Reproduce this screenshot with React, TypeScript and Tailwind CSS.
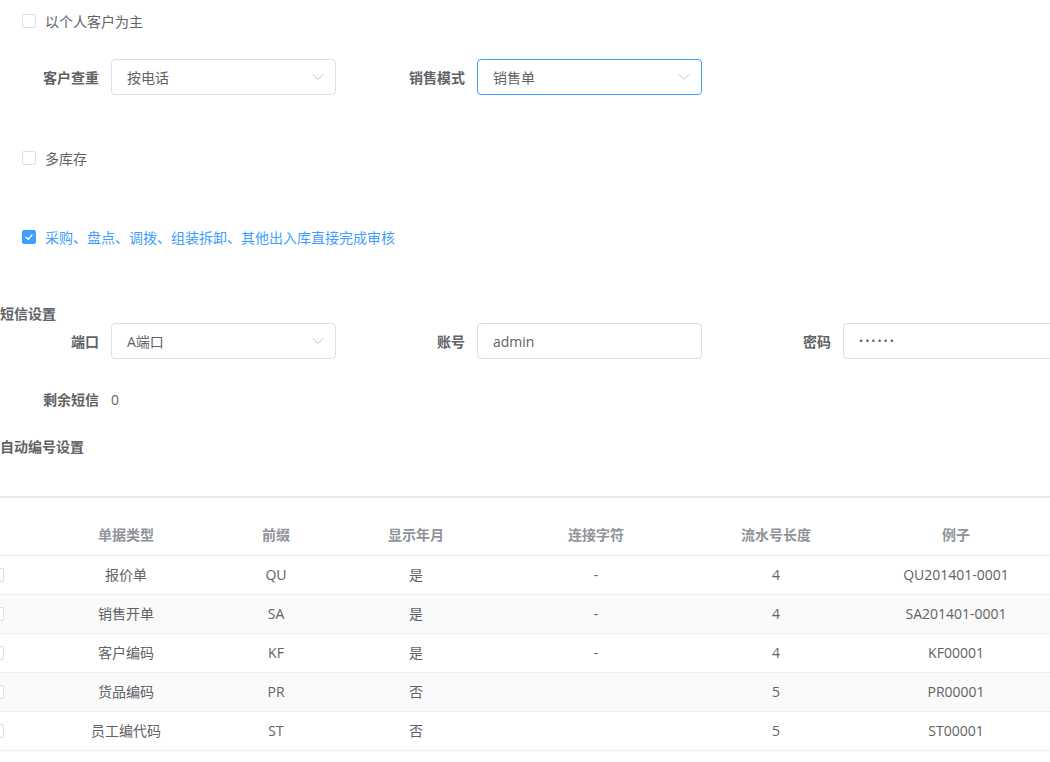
import React from "react";

const font = "font-['Open_Sans','Noto_Sans_CJK_SC',sans-serif]";

function Chevron() {
  return (
    <svg width="14" height="14" viewBox="0 0 14 14" fill="none" stroke="#c0c4cc" strokeWidth="1" strokeLinecap="round" strokeLinejoin="round">
      <path d="M2 4.5 L7 9.5 L12 4.5" />
    </svg>
  );
}

function Check({ checked, label }: { checked?: boolean; label: string }) {
  return (
    <div className="flex items-center pl-[22px] h-[28px]">
      {checked ? (
        <span className="w-[14px] h-[14px] rounded-[2px] bg-[#409eff] border border-[#409eff] flex items-center justify-center">
          <svg width="10" height="10" viewBox="0 0 10 10" fill="none" stroke="#fff" strokeWidth="1.3" strokeLinecap="round" strokeLinejoin="round">
            <path d="M2 5.2 L4.2 7.3 L8 3" />
          </svg>
        </span>
      ) : (
        <span className="w-[14px] h-[14px] rounded-[2px] bg-white border border-[#dcdfe6]" />
      )}
      <span className={`ml-[9px] text-[14px] ${checked ? "text-[#409eff]" : "text-[#606266]"}`}>{label}</span>
    </div>
  );
}

function Select({ value, focused }: { value: string; focused?: boolean }) {
  return (
    <div
      className={`w-[225px] h-[36px] rounded-[4px] border ${focused ? "border-[#409eff]" : "border-[#dcdfe6]"} bg-white flex items-center justify-between pl-[15px] pr-[10px] shrink-0`}
    >
      <span className="text-[14px] text-[#606266]">{value}</span>
      <Chevron />
    </div>
  );
}

function Input({ value, wide, small }: { value: string; wide?: boolean; small?: boolean }) {
  return (
    <div
      className={`${wide ? "w-[260px]" : "w-[225px]"} h-[36px] rounded-[4px] border border-[#dcdfe6] bg-white flex items-center pl-[15px] shrink-0`}
    >
      <span className={`${small ? "text-[11px] tracking-[2px]" : "text-[14px]"} text-[#606266]`}>{value}</span>
    </div>
  );
}

function Label({ text, w }: { text: string; w: string }) {
  return (
    <div className={`${w} shrink-0 pr-[12px] text-right text-[14px] font-bold text-[#606266]`}>{text}</div>
  );
}

const rows = [
  ["报价单", "QU", "是", "-", "4", "QU201401-0001"],
  ["销售开单", "SA", "是", "-", "4", "SA201401-0001"],
  ["客户编码", "KF", "是", "-", "4", "KF00001"],
  ["货品编码", "PR", "否", "", "5", "PR00001"],
  ["员工编代码", "ST", "否", "", "5", "ST00001"],
];

const widths = ["w-[58px]", "w-[200px]", "w-[100px]", "w-[180px]", "w-[180px]", "w-[180px]", "w-[180px]"];

export default function App() {
  return (
    <div className={`${font} w-[1050px] h-[762px] overflow-hidden bg-white text-[#606266]`}>
      <div className="h-[42px] flex items-center">
        <Check label="以个人客户为主" />
      </div>

      <div className="mt-[17px] flex items-center">
        <Label text="客户查重" w="w-[111px]" />
        <Select value="按电话" />
        <Label text="销售模式" w="w-[141px]" />
        <Select value="销售单" focused />
      </div>

      <div className="mt-[49px]">
        <Check label="多库存" />
      </div>

      <div className="mt-[51px]">
        <Check checked label="采购、盘点、调拨、组装拆卸、其他出入库直接完成审核" />
      </div>

      <div className="mt-[54px] h-[18px] leading-[18px] text-[14px] font-bold text-[#606266]">短信设置</div>

      <div className="flex items-center">
        <Label text="端口" w="w-[111px]" />
        <Select value="A端口" />
        <Label text="账号" w="w-[141px]" />
        <Input value="admin" />
        <Label text="密码" w="w-[141px]" />
        <Input value="••••••" wide small />
      </div>

      <div className="mt-[30px] h-[20px] flex items-center">
        <Label text="剩余短信" w="w-[111px]" />
        <span className="text-[14px] text-[#606266]">0</span>
      </div>

      <div className="mt-[28px] h-[20px] leading-[20px] text-[14px] font-bold text-[#606266]">自动编号设置</div>

      <div className="mt-[39px] border-t-2 border-[#e6e6f0]" />

      <div className="mt-[16px] ml-[-32px]">
        <table className="table-fixed border-collapse w-[1258px]">
          <colgroup>
            {widths.map((w, i) => (
              <col key={i} className={w} />
            ))}
          </colgroup>
          <thead>
            <tr className="h-[41px] border-b border-[#ebeef5]">
              <th></th>
              {["单据类型", "前缀", "显示年月", "连接字符", "流水号长度", "例子", ""].map((h, i) => (
                <th key={i} className="text-center text-[14px] font-semibold text-[#909399]">
                  {h}
                </th>
              ))}
            </tr>
          </thead>
          <tbody>
            {rows.map((r, i) => (
              <tr key={i} className={`h-[39px] border-b border-[#ebeef5] ${i % 2 === 1 ? "bg-[#fafafa]" : "bg-white"}`}>
                <td>
                  <div className="flex justify-center">
                    <span className="w-[14px] h-[14px] rounded-[2px] bg-white border border-[#dcdfe6]" />
                  </div>
                </td>
                {r.map((c, j) => (
                  <td key={j} className="text-center text-[14px] text-[#606266]">
                    {c}
                  </td>
                ))}
                <td></td>
              </tr>
            ))}
          </tbody>
        </table>
      </div>
    </div>
  );
}
